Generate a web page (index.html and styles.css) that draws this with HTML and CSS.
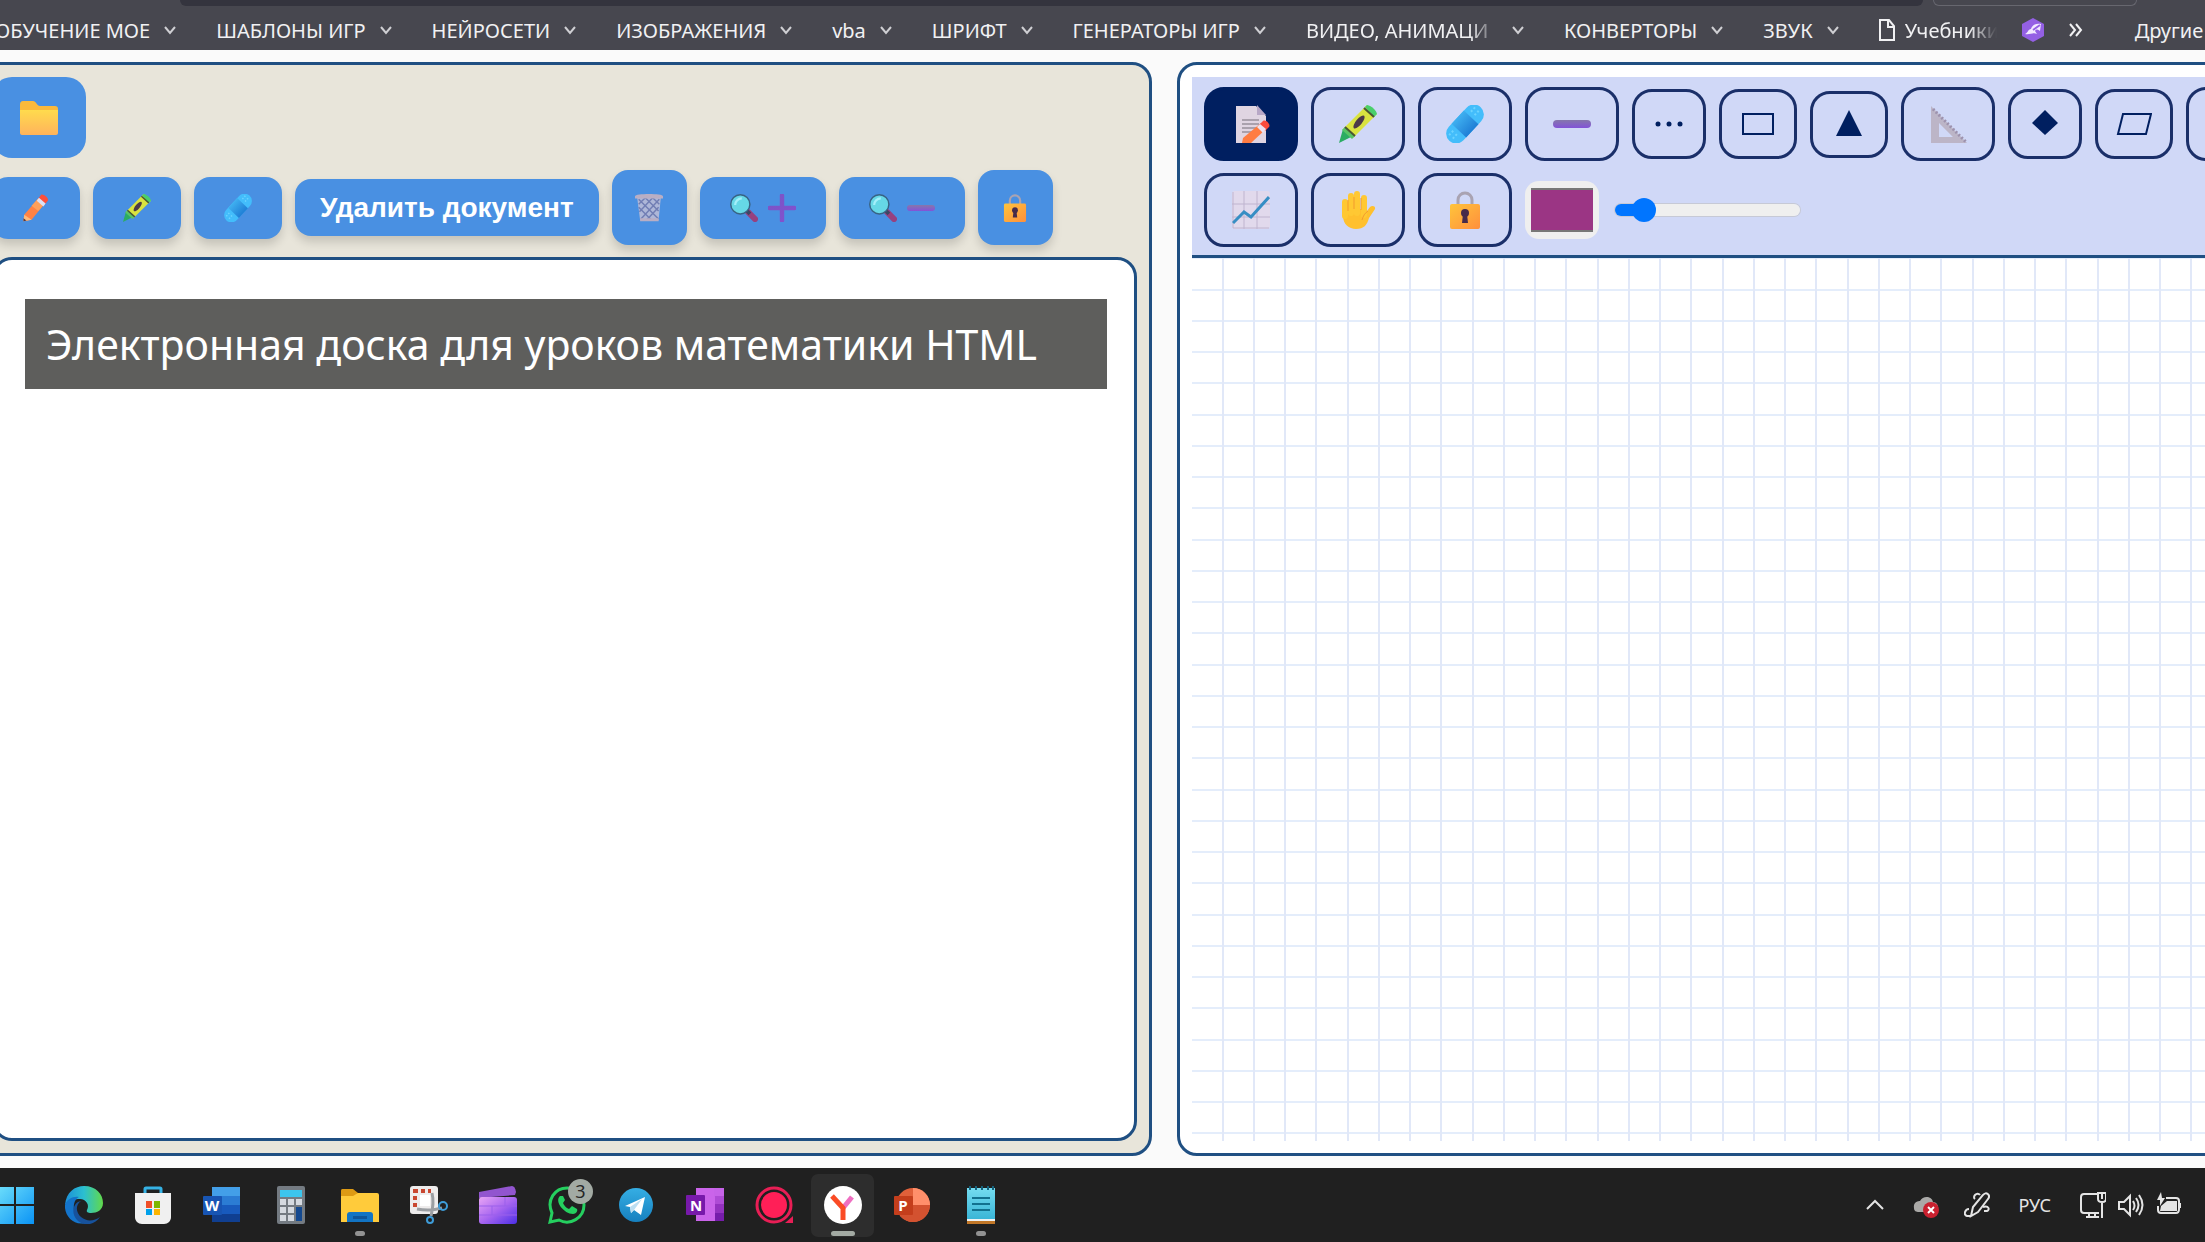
FILE: index.html
```html
<!DOCTYPE html>
<html lang="ru">
<head>
    <meta charset="UTF-8">
    <meta name="viewport" content="width=device-width, initial-scale=1.0">
    <title>Электронная доска</title>
    <link rel="stylesheet" href="styles.css">
</head>
<body>
    <!-- Shared icons -->
    <svg class="sprite" aria-hidden="true">
        <defs>
            <linearGradient id="gFolder" x1="0" y1="0" x2="0" y2="1"><stop offset="0" stop-color="#ffdb4d"/><stop offset="1" stop-color="#ffb35c"/></linearGradient>
            <linearGradient id="gLock" x1="0" y1="0" x2="1" y2="1"><stop offset="0" stop-color="#ffc43b"/><stop offset="1" stop-color="#ff8f3d"/></linearGradient>
            <linearGradient id="gLine" x1="0" y1="0" x2="0" y2="1"><stop offset="0" stop-color="#8577ab"/><stop offset="1" stop-color="#8253d8"/></linearGradient>
            <linearGradient id="gPlus" x1="0" y1="0" x2="1" y2="1"><stop offset="0" stop-color="#7a55c4"/><stop offset="1" stop-color="#8450d0"/></linearGradient>
            <linearGradient id="gPatch" x1="0" y1="0" x2="0" y2="1"><stop offset="0" stop-color="#3fb0f0"/><stop offset="1" stop-color="#1f7fd6"/></linearGradient>
            <linearGradient id="gWin" x1="0" y1="0" x2="1" y2="1"><stop offset="0" stop-color="#6fe0fb"/><stop offset="1" stop-color="#0a93f5"/></linearGradient>
            <linearGradient id="gEdge" x1="0" y1="0" x2="1" y2="0"><stop offset="0" stop-color="#1c8fd8"/><stop offset=".5" stop-color="#2bbfd0"/><stop offset="1" stop-color="#62d94a"/></linearGradient>
            <linearGradient id="gClip" x1="0" y1="0" x2="1" y2="1"><stop offset="0" stop-color="#e9a5f5"/><stop offset=".5" stop-color="#a866f0"/><stop offset="1" stop-color="#4b2ee6"/></linearGradient>
            <linearGradient id="gTele" x1="0" y1="0" x2="0" y2="1"><stop offset="0" stop-color="#35aee4"/><stop offset="1" stop-color="#1680bf"/></linearGradient>
            <linearGradient id="gNote" x1="0" y1="0" x2="0" y2="1"><stop offset="0" stop-color="#74dcf0"/><stop offset="1" stop-color="#38b4d6"/></linearGradient>
        </defs>
        <symbol id="pencil" viewBox="0 0 38 38">
            <path d="M3 28 22 6l9 7-18 22-11 2z" fill="#ff8244"/>
            <path d="M22 6 13 16l9 7 9-10z" fill="#ffa05a"/>
            <path d="m22 6 4-5c2-2 11 4 9 8l-4 5z" fill="#fb4f3b"/>
            <path d="m20 9 3-4 9 8-3 4z" fill="#dbe0f4"/>
            <path d="m3 28 10 7-11 2z" fill="#ffb978"/><path d="m2 33 4 3-4 1z" fill="#4a3442"/>
        </symbol>
        <symbol id="crayon" viewBox="0 0 38 38">
            <path d="m0 38 4-14 8 8z" fill="#2bac63"/>
            <path d="m4 24 10 9L38 9 28 0z" fill="#d9e340"/>
            <path d="m3 25 3-3 10 9-3 3z" fill="#58c466"/>
            <path d="m26 2 2-2c5 1 9 5 10 9l-3 3z" fill="#49cf6b"/>
            <path d="m6 22 10 9M25 3l10 9" stroke="#4a5634" stroke-width="2"/>
            <ellipse cx="20" cy="17" rx="8" ry="3" transform="rotate(-50 20 17)" fill="#4c3a48"/>
        </symbol>
        <symbol id="patch" viewBox="0 0 38 38">
            <g transform="rotate(-47 19 19)">
                <rect x="-4" y="9" width="46" height="20" rx="10" fill="#43bdfb"/>
                <rect x="10" y="9" width="18" height="20" fill="url(#gPatch)"/>
                <path d="M0 15h6M0 20h6M32 15h6M32 20h6" stroke="#6cd3ff" stroke-width="2" stroke-dasharray="2 2"/>
            </g>
        </symbol>
        <symbol id="lock" viewBox="0 0 38 38">
            <path d="M12 15V9a7 7 0 0 1 14 0v6" fill="none" stroke="#a9a3b2" stroke-width="3"/>
            <rect x="4" y="13" width="30" height="25" rx="2" fill="url(#gLock)"/>
            <circle cx="19" cy="22" r="4" fill="#472b4a"/><path d="M17 23h4l1 9h-6z" fill="#472b4a"/>
        </symbol>
        <symbol id="minus" viewBox="0 0 38 38">
            <rect x="0" y="15" width="38" height="8" rx="4" fill="url(#gLine)"/>
        </symbol>
        <symbol id="plus" viewBox="0 0 38 38">
            <path d="M16 2a3 3 0 0 1 6 0v14h14a3 3 0 0 1 0 6H22v14a3 3 0 0 1-6 0V22H2a3 3 0 0 1 0-6h14z" fill="url(#gPlus)"/>
        </symbol>
        <symbol id="loupe" viewBox="0 0 38 38">
            <path d="m24 24 10 10" stroke="#97417f" stroke-width="8" stroke-linecap="round"/>
            <path d="m22 22 5 5" stroke="#3d4665" stroke-width="5"/>
            <circle cx="14" cy="14" r="13" fill="#66d8e6" stroke="#386384" stroke-width="2"/>
            <path d="M7 15c0-5 4-9 9-9" stroke="#a4effa" stroke-width="3" fill="none"/>
        </symbol>
        <symbol id="chevron" viewBox="0 0 12 10"><path d="m1 2 5 6 5-6" fill="none" stroke="currentColor" stroke-width="2"/></symbol>
    </svg>

    <header class="browser">
        <div class="tab-strip"><span class="strip"></span><span class="tab"></span></div>
        <nav class="bookmarks">
            <a href="#">ОБУЧЕНИЕ МОЕ <svg class="chev"><use href="#chevron"/></svg></a>
            <a href="#">ШАБЛОНЫ ИГР <svg class="chev"><use href="#chevron"/></svg></a>
            <a href="#">НЕЙРОСЕТИ <svg class="chev"><use href="#chevron"/></svg></a>
            <a href="#">ИЗОБРАЖЕНИЯ <svg class="chev"><use href="#chevron"/></svg></a>
            <a href="#">vba <svg class="chev"><use href="#chevron"/></svg></a>
            <a href="#">ШРИФТ <svg class="chev"><use href="#chevron"/></svg></a>
            <a href="#">ГЕНЕРАТОРЫ ИГР <svg class="chev"><use href="#chevron"/></svg></a>
            <a href="#"><span class="fade">ВИДЕО, АНИМАЦИ</span> <svg class="chev"><use href="#chevron"/></svg></a>
            <a href="#">КОНВЕРТОРЫ <svg class="chev"><use href="#chevron"/></svg></a>
            <a href="#">ЗВУК <svg class="chev"><use href="#chevron"/></svg></a>
            <a href="#" class="page-link"><svg class="page" viewBox="0 0 16 22"><path d="M1 1h9l5 6v14H1zM9 1v7h6" fill="none" stroke="currentColor" stroke-width="2"/></svg><span class="fade short">Учебники</span></a>
            <a href="#" class="gem-link" aria-label="Закладка"><svg class="gem" viewBox="0 0 24 24"><path d="M12 0 23 6v12l-11 6L1 18V6z" fill="#9460e4"/><path d="M4 16c3-1 3-5 6-5 1-4 5-6 10-5l-1 7c-2-2-4-2-5 0l2 3c-4-2-7 1-12 0z" fill="#f2e9ff"/><path d="m12 12 7-5" stroke="#9460e4" stroke-width="2"/></svg></a>
            <button class="more" aria-label="Ещё"><svg viewBox="0 0 14 14"><path d="m1 1 5 6-5 6M7 1l5 6-5 6" fill="none" stroke="currentColor" stroke-width="2"/></svg></button>
            <a href="#" class="other">Другие</a>
        </nav>
    </header>

    <main class="workspace">
        <section class="panel panel-doc">
            <div class="tools">
                <button class="btn btn-open" aria-label="Открыть"><svg class="icon-lg" viewBox="0 0 38 38"><path d="M0 6c0-3 1-4 3-4h10c3 0 4 5 7 5h15c2 0 3 1 3 3v10H0z" fill="#fbb93b"/><path d="M0 11h38v23c0 1-1 2-2 2H2c-1 0-2-1-2-2z" fill="url(#gFolder)"/></svg></button>
            </div>
            <div class="tools">
                <button class="btn" aria-label="Карандаш"><svg class="icon"><use href="#pencil"/></svg></button>
                <button class="btn" aria-label="Мелок"><svg class="icon"><use href="#crayon"/></svg></button>
                <button class="btn" aria-label="Ластик"><svg class="icon"><use href="#patch"/></svg></button>
                <button class="btn btn-text">Удалить документ</button>
                <button class="btn btn-tall" aria-label="Очистить"><svg class="icon" viewBox="0 0 38 38"><path d="M3 5h32l-3 31H7z" fill="#aeb7d8"/><path d="m5 7 27 27M14 5l18 18M24 5l9 9M5 18l17 17M33 7 8 34M24 5 6 24M14 5l-9 9M32 18 16 35" stroke="#717eb4" stroke-width="2"/><path d="M0 3c0-4 38-4 38 0v3H0zM7 33h25v4H7z" fill="#b9aec4"/></svg></button>
                <button class="btn btn-zoom" aria-label="Увеличить"><svg class="icon"><use href="#loupe"/></svg><svg class="icon"><use href="#plus"/></svg></button>
                <button class="btn btn-zoom" aria-label="Уменьшить"><svg class="icon"><use href="#loupe"/></svg><svg class="icon"><use href="#minus"/></svg></button>
                <button class="btn btn-tall" aria-label="Закрепить"><svg class="icon"><use href="#lock"/></svg></button>
            </div>
            <div class="viewer">
                <h1>Электронная доска для уроков математики HTML</h1>
            </div>
        </section>

        <section class="panel panel-board">
            <div class="board-tools">
                <button class="tool active" aria-label="Писать"><svg class="icon-lg" viewBox="0 0 38 38"><path d="M4 1h20l10 10v27H4z" fill="#e0d5e2"/><path d="M25 0v10h9z" fill="#b8a8c6"/><path d="M10 15h17M10 19h17M10 23h14M10 27h10" stroke="#aaa1ad" stroke-width="2"/><path d="m10 38 1-5 18-15 6 5-16 15z" fill="#ff7c42"/><path d="m27 20 4-4c3-2 8 4 6 6l-4 4z" fill="#fa4b3c"/><path d="m25 22 3-3 6 5-3 4z" fill="#ece1f0"/></svg></button>
                <button class="tool" aria-label="Мелок"><svg class="icon-lg"><use href="#crayon"/></svg></button>
                <button class="tool" aria-label="Ластик"><svg class="icon-lg"><use href="#patch"/></svg></button>
                <button class="tool" aria-label="Линия"><svg class="icon-lg"><use href="#minus"/></svg></button>
                <button class="tool sm" aria-label="Пунктир"><svg class="shape" viewBox="0 0 36 36"><circle cx="7" cy="18" r="2.5"/><circle cx="18" cy="18" r="2.5"/><circle cx="29" cy="18" r="2.5"/></svg></button>
                <button class="tool md" aria-label="Прямоугольник"><svg class="shape" viewBox="0 0 36 36"><path d="M3 8h30v20H3z" fill="none" stroke="#001f60" stroke-width="2"/></svg></button>
                <button class="tool md low" aria-label="Треугольник"><svg class="shape" viewBox="0 0 36 36"><path d="m18 4 13 26H5z"/></svg></button>
                <button class="tool" aria-label="Угольник"><svg class="icon-lg" viewBox="0 0 38 38"><path d="M2 1v37h36zm8 17 14 14H10z" fill="#bcb5c7" fill-rule="evenodd"/><path d="m4 4 33 33" stroke="#9d92ae" stroke-width="3" stroke-dasharray="2 2"/></svg></button>
                <button class="tool sm" aria-label="Ромб"><svg class="shape" viewBox="0 0 36 36"><path d="m18 4 13 13-13 12L5 17z"/></svg></button>
                <button class="tool md" aria-label="Параллелограмм"><svg class="shape" viewBox="0 0 36 36"><path d="M7 8h28l-5 20H2z" fill="none" stroke="#001f60" stroke-width="2"/></svg></button>
                <button class="tool" aria-label="Окружность"></button>
                <button class="tool" aria-label="График"><svg class="icon-lg" viewBox="0 0 38 38"><rect width="38" height="38" rx="3" fill="#e1d9ec"/><path d="M12 0v38M25 0v38M0 13h38M0 26h38M1 1v36h36" stroke="#bfb4cf" fill="none"/><path d="m1 32 11-11 7 5L37 6" stroke="#378ec4" stroke-width="3" fill="none"/></svg></button>
                <button class="tool" aria-label="Рука"><svg class="icon-lg" viewBox="0 0 38 38"><path d="M4 13v12c0 8 6 13 13 13 8 0 11-4 13-11l6-9c1-3-3-4-5-2l-3 4" fill="#ffc02e"/><path d="M6 25V11M12 22V5M18 22V3M25 24V7" stroke="#ffc833" stroke-width="6" stroke-linecap="round"/><path d="M9 20V9M15 18V6M22 19V7M29 20c-3 2-5 5-6 9" stroke="#f29b2f" fill="none"/></svg></button>
                <button class="tool" aria-label="Закрепить"><svg class="icon-lg"><use href="#lock"/></svg></button>
                <input class="color" type="color" value="#9b3584" aria-label="Цвет">
                <input class="size" type="range" min="1" max="20" value="3" aria-label="Толщина">
            </div>
            <div class="canvas"></div>
        </section>
    </main>

    <footer class="taskbar">
        <div class="apps">
            <button class="app" aria-label="Пуск"><svg viewBox="0 0 38 38"><path d="M0 1h18v17H0zM20 1h18v17H20zM0 20h18v18H0zM20 20h18v18H20z" fill="url(#gWin)"/></svg></button>
            <button class="app" aria-label="Edge"><svg viewBox="0 0 38 38"><path d="M0 19C1 6 10 0 19 0c12 0 19 8 19 17 0 7-6 10-12 10-3 0-5-1-4-3 3-5-1-11-7-11C9 13 3 15 0 19z" fill="url(#gEdge)"/><path d="M0 19c2-6 8-9 14-8-3 1-6 6-5 13 1 6 5 11 11 13C9 40-1 30 0 19z" fill="#1474cb"/><path d="M16 15c-6 4-5 12 0 16 6 5 13 4 19 0-5 8-16 10-23 3-7-8-3-18 4-19z" fill="#17529c"/></svg></button>
            <button class="app" aria-label="Магазин"><svg viewBox="0 0 38 38"><path d="M11 9V3q0-1 1-1h14q1 0 1 1v6" fill="none" stroke="#35b2e5" stroke-width="3"/><path d="M1 7h36v24c0 4-3 7-7 7H8c-4 0-7-3-7-7z" fill="#f0f0f0"/><path d="M12 15h6v7h-6z" fill="#f05028"/><path d="M20 15h6v7h-6z" fill="#7db700"/><path d="M12 23h6v6h-6z" fill="#00a0ea"/><path d="M20 23h6v6h-6z" fill="#fcb500"/></svg></button>
            <button class="app" aria-label="Word"><svg viewBox="0 0 38 38"><path d="M9 1h28v10H9z" fill="#439fe8"/><path d="M9 10h28v9H9z" fill="#2b7cd4"/><path d="M9 19h28v9H9z" fill="#185abd"/><path d="M9 28h28v8H9z" fill="#103f91"/><rect y="10" width="19" height="19" rx="1" fill="#1855b3"/><text x="9" y="25" class="letter">W</text></svg></button>
            <button class="app" aria-label="Калькулятор"><svg viewBox="0 0 38 38"><rect x="5" width="28" height="38" rx="2" fill="#747b82"/><path d="M8 4h22v7H8z" fill="#3cc5ed"/><path d="M8 13h6v6H8zM16 13h6v6h-6zM24 13h6v6h-6zM8 21h6v6H8zM16 21h6v6h-6zM8 29h6v6H8zM16 29h6v6h-6z" fill="#d5dae0"/><path d="M24 21h6v14h-6z" fill="#14498f"/></svg></button>
            <button class="app open" aria-label="Проводник"><svg viewBox="0 0 38 38"><path d="M0 5c0-2 1-2 2-2h10l5 4v4H0z" fill="#dd9a14"/><path d="M0 10h12l5-3h19q2 0 2 2v27H0z" fill="#ffcb3b"/><path d="M6 36v-7q0-3 3-3h20q3 0 3 3v7z" fill="#1274c4"/><path d="M12 30h14v3H12z" fill="#0e559a"/></svg></button>
            <button class="app" aria-label="Ножницы"><svg viewBox="0 0 38 38"><rect width="28" height="28" rx="3" fill="#eeecec"/><path d="M4 5h17M5 3v18" stroke="#c94730" stroke-width="4" stroke-dasharray="4 3" fill="none"/><path d="M10 9h10v11H10z" fill="#fff"/><path d="M22 7c2 8 1 15-1 23M7 23c10 2 18 1 25-1" stroke="#9b9ea2" stroke-width="3" fill="none"/><circle cx="20" cy="34" r="3" fill="none" stroke="#3e9cd8" stroke-width="2"/><circle cx="33" cy="20" r="4" fill="none" stroke="#3e9cd8" stroke-width="2"/></svg></button>
            <button class="app" aria-label="Clipchamp"><svg viewBox="0 0 38 38"><path d="m0 6 33-6q3 0 4 6l-1 3L0 12z" fill="#9255cf"/><rect y="11" width="38" height="27" rx="3" fill="url(#gClip)"/><path d="M0 20h38M0 29h38M13 20v9M26 11v9" stroke="#9a61eb" stroke-width="1"/></svg></button>
            <button class="app" aria-label="WhatsApp"><svg viewBox="0 0 38 38"><path d="M2 36 4 27C-2 14 7 2 19 2c10 0 17 8 17 17 0 13-14 21-25 15z" fill="none" stroke="#25cf5f" stroke-width="3"/><path d="M12 10c-6 5 4 18 13 18 3 0 5-3 4-5l-5-3-3 3c-3-1-5-4-6-6l2-3-2-4z" fill="#25cf5f"/></svg><span class="badge">3</span></button>
            <button class="app" aria-label="Telegram"><svg viewBox="0 0 38 38"><ellipse cx="19" cy="19" rx="17" ry="17" fill="url(#gTele)"/><path d="m8 20 20-9-4 18-7-5-3 3-1-6z" fill="#fff"/><path d="m13 21 12-8-8 11-3 3z" fill="#bddff2"/></svg></button>
            <button class="app" aria-label="OneNote"><svg viewBox="0 0 38 38"><path d="M10 2h28v33H10z" fill="#ca64ea"/><path d="M28 2h10v9H28z" fill="#c663e8"/><path d="M29 10h9v9h-9z" fill="#ae4bd5"/><path d="M29 18h9v9h-9z" fill="#9332bf"/><path d="M29 27h9v8h-9z" fill="#761dab"/><rect y="9" width="19" height="20" rx="1" fill="#7719aa"/><text x="10" y="25" class="letter">N</text></svg></button>
            <button class="app" aria-label="Запись"><svg viewBox="0 0 38 38"><circle cx="19" cy="19" r="17" fill="none" stroke="#e81e55" stroke-width="3"/><circle cx="19" cy="19" r="13" fill="#ff1f57"/><path d="M30 37h8v-7z" fill="#e81e55"/></svg></button>
            <button class="app current" aria-label="Яндекс Браузер"><svg viewBox="0 0 38 38"><circle cx="19" cy="19" r="19" fill="#fff"/><path d="m19 22 9-11" stroke="#ee6fc1" stroke-width="5"/><path d="m8 10 11 12v12" stroke="#fa4b25" stroke-width="5" fill="none"/></svg></button>
            <button class="app" aria-label="PowerPoint"><svg viewBox="0 0 38 38"><circle cx="20" cy="19" r="17" fill="#e0603a"/><path d="M20 2a17 17 0 0 1 17 17H20z" fill="#ff8f6b"/><path d="M20 19h17a17 17 0 0 1-30 11z" fill="#d35230"/><rect x="1" y="10" width="19" height="19" rx="1" fill="#c43e1c"/><text x="10" y="25" class="letter">P</text></svg></button>
            <button class="app open" aria-label="Блокнот"><svg viewBox="0 0 38 38"><path d="M5 2h28v32H5z" fill="url(#gNote)"/><path d="M5 34h28v4H5z" fill="#c17728"/><path d="M5 33h28v2H5z" fill="#eef2f4"/><path d="M8 0v4M14 0v4M20 0v4M26 0v4M31 0v4" stroke="#16627c" stroke-width="2"/><path d="M10 12h18M10 18h18M10 24h18" stroke="#12718f" stroke-width="2"/></svg></button>
        </div>
        <div class="tray">
            <button aria-label="Скрытые значки"><svg viewBox="0 0 26 26"><path d="m5 17 8-8 8 8" fill="none" stroke="currentColor" stroke-width="2"/></svg></button>
            <button aria-label="OneDrive"><svg viewBox="0 0 26 26"><path d="M1 16c-1-6 4-7 6-7 3-6 12-5 13 1 6 0 7 10 1 10H6c-3 0-5-1-5-4z" fill="#aaa9a7"/><circle cx="18" cy="18" r="8" fill="#c9202f"/><path d="m15 15 6 6m0-6-6 6" stroke="#fff" stroke-width="2"/></svg></button>
            <button aria-label="Перо"><svg viewBox="0 0 26 26"><path d="m7 24 2-9L19 3c3-4 8 0 5 4L14 20zM16 3c-3-4-8 2-5 4M5 17c-4 0-6 6-2 7l4 0M19 15c6-2 7 3 4 4h-3" fill="none" stroke="currentColor" stroke-width="2"/></svg></button>
            <button class="lang">РУС</button>
            <button class="status" aria-label="Сеть, звук, батарея">
                <svg viewBox="0 0 26 26"><path d="M17 2H4Q1 2 1 5v13q0 3 3 3h15M9 21v4m6-4v4M6 25h13M22 11v15" fill="none" stroke="currentColor" stroke-width="2"/><path d="M18 1v6q0 3 4 3t4-3V1z" fill="none" stroke="currentColor" stroke-width="2"/><path d="M21 2v5h2V2" fill="currentColor"/></svg>
                <svg viewBox="0 0 26 26"><path d="M1 10h5l6-6v19l-6-6H1zM15 9q3 5 0 9M18 6q5 7 0 14M21 3q7 10 0 20" fill="none" stroke="currentColor" stroke-width="2"/></svg>
                <svg viewBox="0 0 26 26"><path d="M10 6h10q3 0 3 3v8q0 4-3 4H5q-3 0-3-3v-4" fill="none" stroke="currentColor" stroke-width="2"/><path d="m4 19 1-5 6-5h10v10zM23 11h2v5h-2zM5 0 1 8h3v6l5-8H6z" fill="currentColor"/></svg>
            </button>
        </div>
    </footer>
</body>
</html>
```
FILE: styles.css
```css
* {
    box-sizing: border-box;
}

body {
    margin: 0;
    min-height: 100vh;
    display: flex;
    flex-direction: column;
    overflow: hidden;
    background-color: #fafafa;
    font-family: "Noto Sans", sans-serif;
}

button {
    border: none;
    padding: 0;
    margin: 0;
    background: none;
    color: inherit;
    font-family: inherit;
    cursor: pointer;
}

svg {
    display: block;
    flex-shrink: 0;
}

.sprite {
    position: absolute;
    width: 0;
    height: 0;
}

/* Browser bar */
.browser {
    background-color: #47474f;
    color: #f1f1f3;
}

.tab-strip {
    display: flex;
    gap: 10px;
    height: 6px;
    padding: 0 68px 0 180px;
}

.strip {
    flex: 1;
    background-color: #34343e;
    border-radius: 0 0 6px 6px;
}

.tab {
    width: 204px;
    border: 1px solid #67676f;
    border-top: none;
    border-radius: 0 0 6px 6px;
}

.bookmarks {
    display: flex;
    align-items: center;
    gap: 40px;
    height: 44px;
    margin-left: -5px;
    padding-top: 4px;
    white-space: nowrap;
    font-size: 20px;
}

.bookmarks a {
    display: flex;
    align-items: center;
    flex-shrink: 0;
    gap: 14px;
    color: inherit;
    text-decoration: none;
}

.chev {
    width: 12px;
    height: 10px;
    color: #cfcfd3;
}

.fade {
    width: 192px;
    mask-image: linear-gradient(to right, #000 85%, transparent);
}

.fade.short {
    width: 92px;
    mask-image: linear-gradient(to right, #000 70%, transparent);
}

.bookmarks .page-link {
    gap: 10px;
}

.page {
    width: 16px;
    height: 22px;
}

.gem {
    width: 24px;
    height: 24px;
}

.gem-link,
.more {
    margin-left: -16px;
}

.more svg {
    width: 14px;
    height: 14px;
}

.other {
    margin-left: 12px;
}

/* Two panels, both run past the window edges */
.workspace {
    flex: 1;
    display: grid;
    grid-template-columns: 1fr 1fr;
    gap: 25px;
    margin: 12px -147px 12px -23px;
}

.panel {
    display: flex;
    flex-direction: column;
    min-width: 0;
    padding: 12px;
    border: 3px solid #1f4f82;
    border-radius: 20px;
    background-color: white;
}

.panel-doc {
    gap: 12px;
    background-color: #e8e5da;
}

.tools {
    display: flex;
    align-items: center;
    gap: 13px;
}

.btn {
    display: flex;
    align-items: center;
    justify-content: center;
    gap: 10px;
    width: 88px;
    height: 62px;
    border-radius: 16px;
    background-color: #4990e2;
    color: white;
    box-shadow: 0 6px 10px rgba(0, 0, 0, 0.15);
}

.btn-open {
    width: 94px;
    height: 81px;
    border-radius: 20px;
    box-shadow: none;
}

.btn-text {
    width: auto;
    height: 57px;
    padding: 0 25px;
    font: bold 28px "Liberation Sans", sans-serif;
}

.btn-tall {
    width: 75px;
    height: 75px;
}

.btn-zoom {
    width: 126px;
}

.icon {
    width: 28px;
    height: 28px;
}

.icon-lg {
    width: 38px;
    height: 38px;
}

.viewer {
    flex: 1;
    padding: 39px 27px 0 30px;
    border: 3px solid #1f4f82;
    border-radius: 20px;
    background-color: white;
}

.viewer h1 {
    margin: 0;
    padding: 0 21px;
    background-color: #5e5e5c;
    color: white;
    font-size: 41px;
    font-weight: normal;
    line-height: 90px;
    white-space: nowrap;
}

/* Board */
.board-tools {
    display: flex;
    flex-wrap: wrap;
    align-items: center;
    gap: 12px 13px;
    padding: 10px 12px 8px;
    background-color: #d0d8f7;
    border-bottom: 3px solid #1f4f82;
}

.tool {
    display: flex;
    align-items: center;
    justify-content: center;
    width: 94px;
    height: 74px;
    border: 3px solid #1a2f69;
    border-radius: 20px;
}

.tool.active {
    background-color: #001f60;
    border-color: #001f60;
}

.tool.sm {
    width: 74px;
    height: 70px;
}

.tool.md {
    width: 78px;
    height: 70px;
}

.tool.low {
    height: 67px;
}

.shape {
    width: 36px;
    height: 36px;
    fill: #001f60;
}

.color {
    width: 74px;
    height: 58px;
    padding: 7px 6px;
    border: none;
    border-radius: 14px;
    background-color: #efefef;
}

.color::-webkit-color-swatch-wrapper {
    padding: 0;
}

.color::-webkit-color-swatch {
    border: 2px solid #777;
    border-width: 2px 0;
    border-radius: 0;
}

.size {
    appearance: none;
    width: 185px;
    height: 12px;
    margin: 0 3px;
    border-radius: 6px;
    background: linear-gradient(to right, #0075ff 16%, #efefef 16%);
    box-shadow: 0 0 0 1px #c6c9d6;
}

.size::-webkit-slider-thumb {
    appearance: none;
    width: 24px;
    height: 24px;
    border-radius: 50%;
    background-color: #0075ff;
}

/* Four cells per 125px tile */
.canvas {
    flex: 1;
    background-image:
        linear-gradient(to right, transparent 30px, #e1e8f8 30px 32px, transparent 32px 61px, #e1e8f8 61px 63px, transparent 63px 92px, #e1e8f8 92px 94px, transparent 94px 123px, #e1e8f8 123px),
        linear-gradient(to bottom, transparent 30px, #e4edfb 30px 32px, transparent 32px 61px, #e4edfb 61px 63px, transparent 63px 92px, #e4edfb 92px 94px, transparent 94px 123px, #e4edfb 123px);
    background-size: 125px 125px;
    background-position: 0 0, 0 1px;
}

/* Taskbar */
.taskbar {
    display: flex;
    justify-content: space-between;
    align-items: center;
    height: 74px;
    background-color: #202020;
    color: #e4e4e4;
}

.apps {
    display: flex;
    margin-left: -20px;
}

.app {
    position: relative;
    display: flex;
    align-items: center;
    justify-content: center;
    width: 63px;
    height: 63px;
    margin: 0 3px;
    border-radius: 7px;
}

.app svg {
    width: 38px;
    height: 38px;
}

.letter {
    fill: white;
    font: bold 15px "Open Sans", sans-serif;
    text-anchor: middle;
}

.current {
    background-color: #2d2d2d;
}

.open::after,
.current::after {
    content: "";
    position: absolute;
    bottom: 1px;
    width: 10px;
    height: 5px;
    border-radius: 3px;
    background-color: #929292;
}

.current::after {
    width: 24px;
    background-color: #a3aaa3;
}

.badge {
    position: absolute;
    top: 5px;
    right: 5px;
    width: 25px;
    height: 25px;
    border-radius: 50%;
    background-color: #a2aaa3;
    color: #262626;
    font-size: 18px;
    line-height: 25px;
}

.tray {
    display: flex;
    align-items: center;
    gap: 25px;
    padding-right: 23px;
}

.tray svg {
    width: 26px;
    height: 26px;
}

.lang {
    margin: 0 4px;
    font-size: 18px;
}

.status {
    display: flex;
    gap: 12px;
}
```
